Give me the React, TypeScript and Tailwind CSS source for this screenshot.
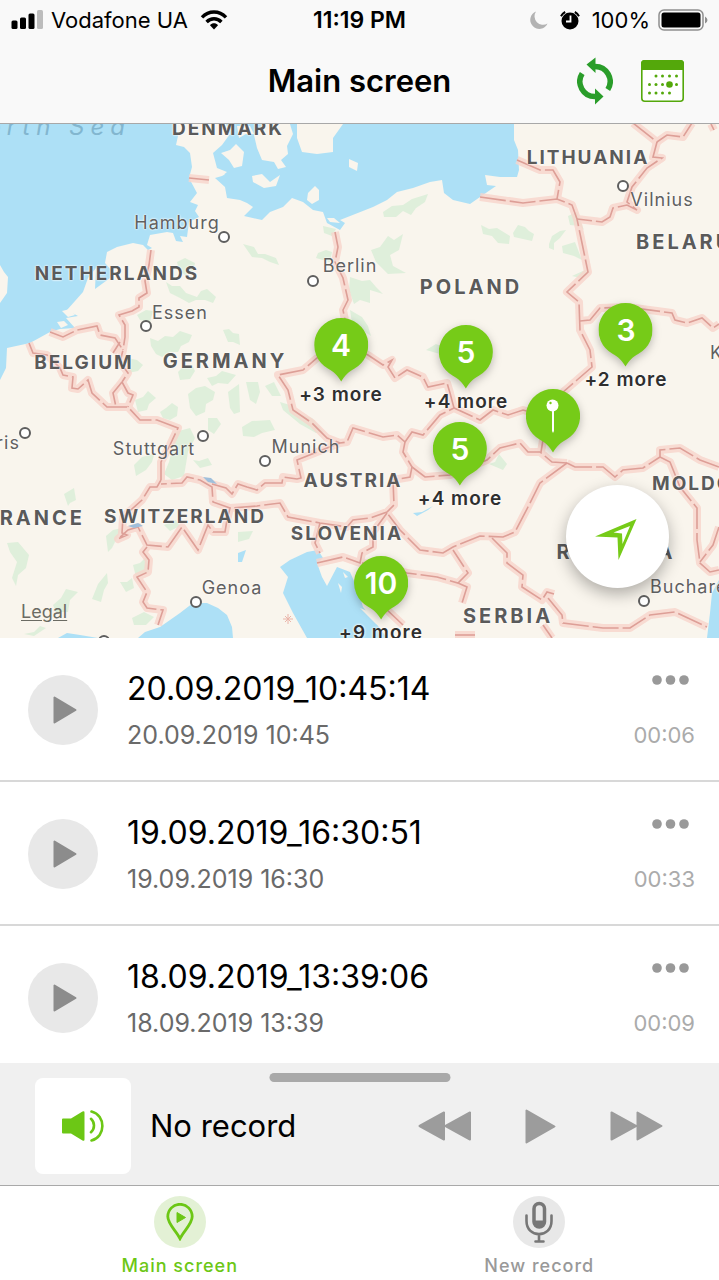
import React, { useState } from 'react';

const MAP_TOP = 124;
const MAP_WIDTH = 719;
const MAP_HEIGHT = 514;

const place = (x: number, y: number) => ({
  left: `${(x / MAP_WIDTH) * 100}%`,
  top: `${((y - MAP_TOP) / MAP_HEIGHT) * 100}%`,
});

const water = [
  // North Sea
  '0,124 173,124 178,136 176,145 184,147 190,153 192,167 189,178 197,193 190,202 198,205 195,211 199,217 189,222 187,237 180,236 183,242 176,241 173,233 167,232 150,235 147,245 152,248 148,250 143,245 133,243 117,247 107,252 105,263 111,270 110,278 95,289 96,268 88,278 83,292 67,310 78,316 66,318 75,328 60,329 50,332 30,343 7,348 6,368 0,380',
  // Baltic
  '226,124 230,134 222,145 213,153 217,168 227,172 222,176 215,178 225,187 227,198 240,200 247,203 253,207 244,216 262,220 270,212 283,207 292,198 303,202 313,210 323,212 327,223 340,230 345,223 340,220 373,207 387,200 397,192 413,188 430,182 442,180 444,193 453,200 470,204 480,197 496,186 487,185 485,175 500,177 517,177 519,170 518,150 514,140 514,124 343,124 333,138 333,152 317,154 302,152 297,138 297,124',
  // Adriatic
  '280,567 290,560 307,552 318,550 323,558 317,563 322,577 327,586 337,567 350,572 358,590 363,607 372,618 387,638 307,638 293,613 283,593 288,577',
  '138,638 145,632 160,627 180,613 193,603 207,603 218,608 227,615 232,627 233,638',
  '58,638 67,633 80,635 98,638',
  '719,580 712,593 710,613 707,638 719,638',
  '238,553 246,550 242,562 238,562',
  '413,513 422,512 433,506 428,510 417,516',
];

const lakes = ['128,526 138,523 143,526 134,528', '203,477 211,478 217,484 208,482'];

const islands = [
  '0,265 4,272 8,277 7,293 0,303',
  '230,150 236,144 244,152 242,166 234,168 229,160 221,153',
  '254,135 262,128 262,124 290,124 293,134 287,146 288,154 281,160 286,167 278,169 274,162 262,160 257,148',
  '252,176 262,174 270,182 280,175 276,186 264,188 253,182',
  '237,126 250,126 254,134 246,134 239,138',
  '308,193 315,186 319,190 319,200 312,204 307,200',
  '349,159 358,163 357,171 349,167',
  '211,172 218,170 225,175 216,176',
  '327,218 334,218 340,223 330,222',
  '62,311 70,309 75,315 68,317',
  '57,322 64,321 68,325 61,328',
  '343,572 348,577 345,578',
  '338,583 342,587 341,593',
  '360,608 370,612 384,628 376,624',
];

const greens = [
  '177,262 185,258 195,263 193,272 189,271 186,276 179,270',
  '166,282 172,286 180,286 186,293 197,297 201,291 207,289 216,297 213,303 205,300 196,300 189,303 180,298 170,293',
  '137,315 146,310 153,311 150,322 140,320',
  '150,338 158,341 165,336 173,337 180,331 192,335 189,342 181,346 178,352 170,352 162,357 156,354 151,346',
  '223,330 229,329 233,333 239,334 240,345 233,342 228,342',
  '178,372 184,366 192,365 195,371 190,379 180,380',
  '128,358 137,360 143,365 138,371 128,373',
  '243,244 254,247 258,254 265,254 276,258 279,265 270,262 262,258 252,257',
  '383,212 392,206 403,205 412,199 428,194 425,202 416,208 411,215 403,211 396,217 384,217',
  '371,250 380,247 388,236 394,240 403,234 399,250 390,255 393,266 406,273 388,274 376,262',
  '350,277 362,281 370,280 376,287 383,294 370,290 370,303 360,300 354,304 349,290',
  '318,253 326,250 332,252 330,262 316,258',
  '323,226 336,229 332,236 324,233',
  '350,310 362,317 368,326 371,336 362,330 353,330',
  '426,350 436,344 446,348 440,354',
  '481,225 489,229 497,228 510,236 509,244 498,243 492,236 483,234',
  '513,233 518,225 525,227 529,231 534,234 532,241 514,237',
  '549,244 552,236 560,231 566,230 560,238 554,243 554,250 549,248',
  '562,246 575,242 582,260 574,256 563,253',
  '568,216 577,212 584,230 580,226 570,225',
  '572,276 585,270 590,272 580,278',
  '188,394 196,388 205,386 215,392 213,400 206,404 205,412 196,416 190,408',
  '135,400 143,397 148,391 156,398 149,404 147,410 138,412',
  '160,412 166,408 172,403 178,407 177,416 170,420 163,418',
  '207,378 216,376 222,371 236,375 228,384 218,383 212,386',
  '228,392 239,384 240,412 234,414 230,408',
  '208,418 217,418 221,424 214,434 208,430',
  '175,432 190,428 195,438 188,452 184,476 172,480 164,474 169,462 172,450',
  '193,460 199,461 208,458 212,465 200,468',
  '134,465 142,457 150,455 155,452 152,462 146,470 136,476',
  '64,494 74,488 76,500 70,503 68,506',
  '7,543 18,542 29,555 26,568 18,575 16,586 12,578 17,562 10,552',
  '106,536 113,530 122,528 112,548 108,552',
  '133,565 140,563 147,556 149,572 136,577',
  '98,584 107,573 108,583 104,590 101,602 92,599',
  '120,582 127,582 132,578 134,588 126,592',
  '53,605 61,598 66,589 78,592 70,600 68,612 56,612',
  '24,634 34,632 40,626 46,628 34,636',
  '132,618 144,612 154,617 146,625 134,625',
  '242,427 252,421 270,420 275,430 262,433 254,437 243,436',
  '246,382 258,382 260,392 256,404 250,400',
  '280,402 290,405 298,414 312,418 324,432 316,433 300,424 283,410',
  '265,386 274,382 281,396 272,396',
  '238,532 253,531 249,539 238,542',
  '164,525 176,520 180,526 170,531',
  '489,464 495,462 499,454 507,464 503,470',
];

const borders = [
  '189,178 209,180',
  '151,250 149,265 145,281 147,293 139,298 139,307 132,311 119,315 125,325 125,337 123,350',
  '50,332 63,337 77,330 97,326 100,335 115,338 123,350 120,362 128,373 122,382',
  '120,342 113,353',
  '29,343 33,353 47,355 60,368 63,375 73,377 72,388 78,389 88,380 92,393 107,407 128,407 140,420 147,420 157,420 178,428 170,445 161,462 161,480',
  '122,382 113,393 116,407',
  '122,382 128,393 133,395 128,407',
  '161,480 157,487 150,487 142,500 123,517 122,533 127,535 118,539 128,530 138,527 147,545 168,547 182,527 198,550 208,525 213,532 225,532 227,520 230,508 213,502 212,487 200,480 187,477 182,483 161,484',
  '147,547 143,552 149,560 148,572 137,577 147,592 143,602 147,608 163,610 158,625',
  '212,484 226,488 232,494 238,484 247,487 257,490 265,483 282,483 283,477 297,479 301,478 297,460 327,448 340,443 347,442 353,428 383,437 397,435 405,442 403,452 412,467 410,477 393,480 394,505 387,512 370,518 353,520 347,527 320,523 288,517 280,503 257,506 230,508',
  '330,353 317,358 303,370 278,375 288,390 293,410 312,423 327,438 340,443',
  '362,352 368,355 383,365 392,360 388,367 395,378 407,370 423,377 428,387 447,383 450,393 454,408',
  '405,442 412,432 423,435 440,415 454,408 480,420 493,410 508,415 523,410 540,415',
  '335,232 338,247 335,262 343,278 348,300 343,310 347,330',
  '412,467 425,477 450,475 487,460 500,448 520,443 528,452 540,452 552,462 567,463',
  '543,440 541,452',
  '567,463 575,467 603,467 615,477 623,470 643,468 660,457 660,450 680,448 700,460 719,467',
  '660,457 670,462 680,487 697,508 697,540 700,563 710,572 719,570',
  '719,527 713,545 700,562',
  '567,463 540,483 528,507 515,532 503,537 480,536 453,547 443,553 420,550 400,530 387,513',
  '492,538 507,553 507,563 523,575 522,587 542,600 547,592 554,594',
  '548,598 562,615 563,623 603,628 630,628 650,615 675,612 707,627',
  '543,625 552,638',
  '320,523 315,543 320,553',
  '317,563 343,557 360,563 362,553 373,547 373,532 387,513',
  '362,563 385,566 407,573 437,577 458,583 468,573 453,550',
  '458,583 467,587 462,603',
  '385,608 403,625',
  '455,635 475,635',
  '633,123 657,142 667,135 683,137 692,123',
  '657,142 653,157 662,158 647,168 632,187 627,202 637,210 627,205 613,208 610,217 602,222 577,219',
  '517,160 540,170 553,170 560,182 557,199',
  '480,197 523,203 557,199 572,205 577,219 582,243 588,272 567,292 579,302 580,330 590,350 592,367 577,380 562,393 550,402',
  '580,321 590,320 600,308 627,307 672,313 675,320 687,323 702,318 713,328 719,324',
  '711,124 714,130',
];

const towns = [
  [224, 237], [313, 281], [146, 326], [25, 433], [203, 436], [265, 461], [623, 186], [196, 602], [644, 601], [104, 641],
];

const styles = {
  large: 'font-bold text-xl tracking-[3px] text-[#5a5a5a]',
  country: 'font-bold text-[19px] tracking-[2px] text-[#5a5a5a]',
  city: 'text-lg tracking-[1px] text-[#606060]',
  sea: 'italic text-2xl tracking-[6px] text-[#82b6cf]',
};

const anchors = {
  start: '',
  middle: '-translate-x-1/2',
  end: '-translate-x-full',
};

type Label = { text: string; x: number; y: number; kind: keyof typeof styles; at?: keyof typeof anchors };

const labels: Label[] = [
  { text: 'North Sea', x: 131, y: 127, kind: 'sea', at: 'end' },
  { text: 'DENMARK', x: 228, y: 128, kind: 'country' },
  { text: 'LITHUANIA', x: 588, y: 157, kind: 'country' },
  { text: 'BELARUS', x: 636, y: 242, kind: 'large', at: 'start' },
  { text: 'NETHERLANDS', x: 117, y: 273, kind: 'country' },
  { text: 'POLAND', x: 471, y: 287, kind: 'large' },
  { text: 'BELGIUM', x: 84, y: 362, kind: 'country' },
  { text: 'GERMANY', x: 225, y: 361, kind: 'large' },
  { text: 'AUSTRIA', x: 353, y: 480, kind: 'country' },
  { text: 'MOLDOVA', x: 652, y: 483, kind: 'country', at: 'start' },
  { text: 'SWITZERLAND', x: 185, y: 516, kind: 'country' },
  { text: 'FRANCE', x: 85, y: 518, kind: 'large', at: 'end' },
  { text: 'SLOVENIA', x: 347, y: 533, kind: 'country' },
  { text: 'ROMANIA', x: 616, y: 552, kind: 'large' },
  { text: 'SERBIA', x: 508, y: 616, kind: 'large' },
  { text: 'Hamburg', x: 177, y: 223, kind: 'city' },
  { text: 'Vilnius', x: 662, y: 200, kind: 'city' },
  { text: 'Berlin', x: 350, y: 266, kind: 'city' },
  { text: 'Essen', x: 180, y: 313, kind: 'city' },
  { text: 'Kiev', x: 710, y: 353, kind: 'city', at: 'start' },
  { text: 'Paris', x: 20, y: 443, kind: 'city', at: 'end' },
  { text: 'Stuttgart', x: 154, y: 449, kind: 'city' },
  { text: 'Munich', x: 306, y: 447, kind: 'city' },
  { text: 'Genoa', x: 232, y: 588, kind: 'city' },
  { text: 'Bucharest', x: 650, y: 587, kind: 'city', at: 'start' },
];

const markers = [
  { id: 1, x: 341, y: 318, count: 4, more: '+3 more' },
  { id: 2, x: 466, y: 325, count: 5, more: '+4 more' },
  { id: 3, x: 626, y: 303, count: 3, more: '+2 more' },
  { id: 4, x: 553, y: 389 },
  { id: 5, x: 460, y: 422, count: 5, more: '+4 more' },
  { id: 6, x: 381, y: 556, count: 10, more: '+9 more' },
];

const records = [
  { name: '20.09.2019_10:45:14', date: '20.09.2019 10:45', length: '00:06' },
  { name: '19.09.2019_16:30:51', date: '19.09.2019 16:30', length: '00:33' },
  { name: '18.09.2019_13:39:06', date: '18.09.2019 13:39', length: '00:09' },
];

const StatusBar: React.FC = () => (
  <div className="grid grid-cols-3 items-center h-10 px-[11px] text-[22px] leading-none text-black">
    <div className="flex items-center gap-2 whitespace-nowrap">
      <svg width="32" height="20" viewBox="0 0 32 20" aria-hidden="true">
        <rect x="0.5" y="10.5" width="6" height="8.5" rx="1.5" />
        <rect x="9" y="7.5" width="6" height="11.5" rx="1.5" />
        <rect x="17.5" y="3.5" width="6" height="15.5" rx="1.5" />
        <rect x="26" y="0" width="6" height="19" rx="1.5" fill="#bcbcbc" />
      </svg>
      <span>Vodafone UA</span>
      <svg className="ml-1" width="28" height="20" viewBox="0 0 28 20" fill="none" stroke="#000" strokeWidth="3.4" aria-hidden="true">
        <path d="M2 7.4C8.8 .2 19.2 .2 26 7.4" />
        <path d="M6.6 12C10.8 7.7 17.2 7.7 21.4 12" />
        <path d="M10 15.2C12.2 12.7 15.8 12.7 18 15.2L14 19.6Z" fill="#000" stroke="none" />
      </svg>
    </div>
    <div className="text-center text-[23px] leading-none font-semibold whitespace-nowrap">11:19 PM</div>
    <div className="flex items-center justify-end whitespace-nowrap">
      <svg width="18" height="18" viewBox="0 0 18 18" fill="#b3b3b3" aria-hidden="true">
        <path d="M6 .5A9 9 0 1 0 17.5 12.5A8.5 8.5 0 0 1 6 .5Z" />
      </svg>
      <svg className="ml-3" width="20" height="19" viewBox="0 0 20 19" aria-hidden="true">
        <circle cx="10" cy="10" r="8.5" />
        <path d="M1 5.2A10 10 0 0 1 5.2 1M14.8 1A10 10 0 0 1 19 5.2" fill="none" stroke="#000" strokeWidth="2" />
        <path d="M10.5 4.5V10.5H6" fill="none" stroke="#fff" strokeWidth="1.8" />
      </svg>
      <span className="ml-3">100%</span>
      <svg className="ml-2" width="50" height="22" viewBox="0 0 50 22" aria-hidden="true">
        <rect x="1" y="1" width="44" height="20" rx="5" fill="none" stroke="#8f8f8f" strokeWidth="1.5" />
        <rect x="3.5" y="3.5" width="39" height="15" rx="2.5" />
        <path d="M47 7.5Q49.500 9 49.500 11T47 14.500Z" fill="#8f8f8f" />
      </svg>
    </div>
  </div>
);

const calendarDots = [
  [15, 16], [21.5, 16], [28.5, 16], [35.5, 16],
  [8.5, 24.5], [15, 24.5], [21.5, 24.5], [35.5, 24.5],
  [8.5, 33], [15, 33], [21.5, 33], [28.5, 33],
];

const Header: React.FC = () => (
  <header className="bg-[#f9f9f9] border-b border-[#a8a8a8]">
    <StatusBar />
    <div className="grid grid-cols-[1fr_auto_1fr] items-center h-[83px] px-[35px] pb-0.5">
      <h1 className="col-start-2 text-[31px] leading-none font-semibold text-black">Main screen</h1>
      <div className="flex items-center justify-end gap-7">
        <button aria-label="Refresh">
          <svg width="36" height="48" viewBox="0 0 36 48" fill="none" aria-hidden="true">
            <path d="M18 9.5A15 15 0 0 1 30.8 32.5" stroke="#2a9d2a" strokeWidth="5.5" />
            <path d="M18 39.5A15 15 0 0 1 5.2 16.5" stroke="#2a9d2a" strokeWidth="5.5" />
            <path d="M18.5 .5V16L9.5 7.5ZM18 31.5V47.5L26.5 39.5Z" fill="#2a9d2a" />
          </svg>
        </button>
        <button aria-label="Calendar">
          <svg width="43" height="42" viewBox="0 0 43 42" aria-hidden="true">
            <rect x="0.8" y="0.8" width="41.4" height="40.4" rx="3" fill="#fff" stroke="#54a80b" strokeWidth="1.6" />
            <path d="M0 10V3.5Q0 0 3.5 0H39.5Q43 0 43 3.5V10Z" fill="#54a80b" />
            {calendarDots.map(([cx, cy]) => (
              <circle key={`${cx}-${cy}`} cx={cx} cy={cy} r="1.5" fill="#54a80b" />
            ))}
            <circle cx="28.5" cy="24.5" r="3.3" fill="#54a80b" />
          </svg>
        </button>
      </div>
    </div>
  </header>
);

const MapCanvas: React.FC = () => (
  <svg className="block w-full h-full" viewBox={`0 ${MAP_TOP} ${MAP_WIDTH} ${MAP_HEIGHT}`} aria-hidden="true">
    <rect x="0" y="124" width="719" height="514" fill="#f9f5ed" />
    {greens.map((points) => (
      <polygon key={points} points={points} fill="#dfefdb" />
    ))}
    {water.map((points) => (
      <polygon key={points} points={points} fill="#ade0f6" />
    ))}
    {islands.map((points) => (
      <polygon key={points} points={points} fill="#f9f5ed" />
    ))}
    <g fill="none" stroke="#f8d5cc" strokeWidth="8" strokeLinejoin="round" opacity="0.8">
      {borders.map((points) => (
        <polyline key={points} points={points} />
      ))}
    </g>
    <g fill="none" stroke="#dd9f97" strokeWidth="1.6" strokeDasharray="26 4">
      {borders.map((points) => (
        <polyline key={points} points={points} />
      ))}
    </g>
    {lakes.map((points) => (
      <polygon key={points} points={points} fill="#9fbfdb" />
    ))}
    <path d="M288 614V624M283 619H293M285 616L291 622M291 616L285 622" stroke="#eab5aa" />
    {towns.map(([cx, cy]) => (
      <circle key={`${cx}-${cy}`} cx={cx} cy={cy} r="5" fill="#fff" stroke="#5e5e5e" strokeWidth="2" />
    ))}
  </svg>
);

const Marker: React.FC<(typeof markers)[number]> = ({ x, y, count, more }) => (
  <button
    className="absolute -translate-x-1/2 flex flex-col items-center"
    style={place(x, y)}
    aria-label={more ? undefined : 'Record'}
  >
    <span className="relative block">
      <svg className="drop-shadow-[0_3px_4px_rgba(0,0,0,0.25)]" width="54" height="64" viewBox="0 0 54 64" aria-hidden="true">
        <path d="M27 0A27 27 0 0 1 40 50.7C34 54 31 57 27 63.5C23 57 20 54 14 50.7A27 27 0 0 1 27 0Z" fill="#76cb18" />
        {!count && (
          <g>
            <path d="M26 20H28V42L27 44L26 42Z" fill="#fff" />
            <circle cx="26.5" cy="16.5" r="6" fill="#fff" />
            <circle cx="24.5" cy="14" r="1.2" fill="#76cb18" />
          </g>
        )}
      </svg>
      {count && (
        <span className="absolute inset-x-0 top-0 h-[54px] flex items-center justify-center text-[30px] leading-none font-semibold text-white">
          {count}
        </span>
      )}
    </span>
    {more && (
      <span className="text-[19px] leading-[26px] font-semibold tracking-[1px] whitespace-nowrap text-[#2f2f2f] [text-shadow:0_0_2px_#fff,0_0_3px_#fff]">
        {more}
      </span>
    )}
  </button>
);

const MapView: React.FC = () => (
  <section className="relative w-full aspect-[719/514] overflow-hidden bg-[#f9f5ed]" aria-label="Map">
    <MapCanvas />
    {labels.map(({ text, x, y, kind, at = 'middle' }) => (
      <span
        key={text}
        className={`absolute -translate-y-1/2 leading-none whitespace-nowrap ${styles[kind]} ${anchors[at]} ${kind === 'sea' ? '' : '[text-shadow:0_0_2px_#fff,0_0_2px_#fff]'}`}
        style={place(x, y)}
      >
        {text}
      </span>
    ))}
    {markers.map((marker) => (
      <Marker key={marker.id} {...marker} />
    ))}
    <a href="#legal" className="absolute left-[21px] bottom-4 text-lg leading-5 underline underline-offset-2 text-[#6b6b63]">
      Legal
    </a>
    <button
      aria-label="My location"
      className="absolute right-[50px] bottom-[50px] size-[103px] rounded-full bg-white flex items-center justify-center pt-1.5 pr-1 shadow-[0_6px_16px_rgba(0,0,0,0.3)]"
    >
      <svg width="42" height="42" viewBox="0 0 42 42" aria-hidden="true">
        <path d="M41.5 0L23.500 41L22.500 18.500L0 17.500Z" fill="#76cb18" />
        <path d="M35 7L27.500 25L27 14.500L18.500 13.500Z" fill="#fff" />
      </svg>
    </button>
  </section>
);

const RecordRow: React.FC<(typeof records)[number]> = ({ name, date, length }) => (
  <li className="flex items-center gap-[29px] pl-7 pr-6 pt-[33px] pb-[31px] border-b-2 border-[#d8d8d8] last:border-b-0 last:pb-[26px]">
    <button aria-label={`Play ${name}`} className="shrink-0 size-[70px] rounded-full bg-[#e8e8e8] flex items-center justify-center">
      <svg className="ml-1" width="24" height="28" viewBox="0 0 24 28" aria-hidden="true">
        <path d="M1.5 1.5V26.5L22.5 14Z" fill="#8c8c8c" stroke="#8c8c8c" strokeWidth="2" strokeLinejoin="round" />
      </svg>
    </button>
    <div className="flex-1 flex flex-col gap-3.5">
      <span className="text-[32px] leading-9 text-black">{name}</span>
      <span className="text-[25px] leading-7 text-[#6a6a6a]">{date}</span>
    </div>
    <div className="self-stretch flex flex-col items-end justify-between pt-1">
      <button aria-label={`More actions for ${name}`} className="mr-1.5">
        <svg className="block" width="37" height="10" viewBox="0 0 37 10" fill="#999" aria-hidden="true">
          <circle cx="5" cy="5" r="4.8" />
          <circle cx="18.5" cy="5" r="4.8" />
          <circle cx="32" cy="5" r="4.8" />
        </svg>
      </button>
      <span className="text-[22px] leading-7 text-[#ababab]">{length}</span>
    </div>
  </li>
);

const Player: React.FC = () => (
  <section className="relative flex items-center pt-[15px] pb-[11px] pl-[35px] pr-14 bg-[#f0f0f0]" aria-label="Player">
    <span className="absolute top-[10px] left-1/2 -translate-x-1/2 w-[181px] h-[9px] rounded-full bg-[#a9a9a9]" />
    <div className="size-24 rounded-lg bg-white flex items-center justify-center">
      <svg width="42" height="32" viewBox="0 0 42 32" aria-hidden="true">
        <path d="M1 8.5H9L20.5 1.5Q22.5 .5 22.5 2.5V29.5Q22.5 31.5 20.5 30.5L9 23.5H1Q0 23.5 0 22.5V9.5Q0 8.5 1 8.5Z" fill="#6cc715" />
        <path d="M29 8.8A9 9 0 0 1 29 22.2M29.5 1.5C44 5 44 27 29.5 30.5" fill="none" stroke="#6cc715" strokeWidth="2.6" strokeLinecap="round" />
      </svg>
    </div>
    <span className="flex-1 ml-[19px] text-[31px] leading-10 text-black">No record</span>
    <div className="flex items-center gap-[54px]">
      <button aria-label="Rewind">
        <svg width="53" height="30" viewBox="0 0 53 30" fill="#9c9c9c" stroke="#9c9c9c" strokeWidth="2" strokeLinejoin="round" aria-hidden="true">
          <path d="M1.5 15L26 1.5V28.5ZM27.5 15L52 1.5V28.5Z" />
        </svg>
      </button>
      <button aria-label="Play">
        <svg width="31" height="35" viewBox="0 0 31 35" fill="#9c9c9c" stroke="#9c9c9c" strokeWidth="2" strokeLinejoin="round" aria-hidden="true">
          <path d="M1.5 1.5V33.5L29.5 17.5Z" />
        </svg>
      </button>
      <button aria-label="Fast forward">
        <svg width="53" height="30" viewBox="0 0 53 30" fill="#9c9c9c" stroke="#9c9c9c" strokeWidth="2" strokeLinejoin="round" aria-hidden="true">
          <path d="M1.5 1.5V28.5L26 15ZM27.5 1.5V28.5L51.5 15Z" />
        </svg>
      </button>
    </div>
  </section>
);

const TabBar: React.FC<{ tab: string; onChange: (tab: string) => void }> = ({ tab, onChange }) => (
  <nav className="grid grid-cols-2 bg-white border-t border-[#a9a9a9]">
    <button
      onClick={() => onChange('main')}
      aria-current={tab === 'main' ? 'page' : undefined}
      className="flex flex-col items-center gap-1 pt-[10px] text-[#6cc715]"
    >
      <span className="size-[52px] rounded-full bg-[#e3f1d5] flex items-center justify-center">
        <svg width="28" height="38" viewBox="0 0 28 38" aria-hidden="true">
          <path d="M14 35.5C10 27.5 1.8 21 1.8 13.5A12.2 12.2 0 0 1 26.2 13.5C26.2 21 18 27.5 14 35.5Z" fill="none" stroke="#6cc715" strokeWidth="2.8" />
          <path d="M11 9.5V19.5L19.5 14.5Z" fill="#6cc715" stroke="#6cc715" strokeLinejoin="round" />
        </svg>
      </span>
      <span className="text-lg leading-7 font-medium tracking-[1px]">Main screen</span>
    </button>
    <button
      onClick={() => onChange('record')}
      aria-current={tab === 'record' ? 'page' : undefined}
      className="flex flex-col items-center gap-1 pt-[10px] text-[#999999]"
    >
      <span className="size-[52px] rounded-full bg-[#e8e8e8] flex items-center justify-center">
        <svg width="28" height="42" viewBox="0 0 28 42" fill="none" stroke="#777" strokeLinecap="round" aria-hidden="true">
          <rect x="9" y="2.5" width="10.5" height="23.5" rx="5.25" strokeWidth="3.5" />
          <path d="M9 19.5H19.5V21.5Q18 26 14.25 26T9 21.5Z" fill="#777" stroke="none" />
          <path d="M1.5 14.5V20C1.5 37.5 26.5 37.5 26.5 20V14.5M14 33V40M10.5 40.5H18.5" strokeWidth="2.6" />
        </svg>
      </span>
      <span className="text-lg leading-7 font-medium tracking-[1px]">New record</span>
    </button>
  </nav>
);

export default function App() {
  const [tab, setTab] = useState('main');

  return (
    <div className="min-h-screen flex flex-col bg-white font-['Inter','Liberation_Sans',sans-serif]">
      <Header />
      <main className="flex-1">
        <MapView />
        <ul>
          {records.map((record) => (
            <RecordRow key={record.name} {...record} />
          ))}
        </ul>
      </main>
      <Player />
      <TabBar tab={tab} onChange={setTab} />
    </div>
  );
}
